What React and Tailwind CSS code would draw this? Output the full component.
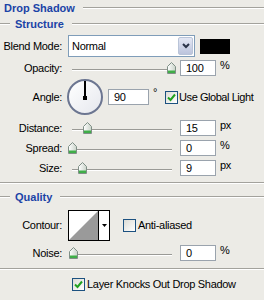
import React from "react";

const LINE = "h-0 border-t border-[#a3a29c] border-b border-b-white";

function SectionTitle({ children, lead }) {
  return (
    <div className="flex h-[16px] items-center">
      {lead && <div className={`w-[10px] ${LINE}`} />}
      <span
        className={`${lead ? "ml-[5px]" : "ml-[4px]"} font-bold text-[11px] leading-none tracking-normal text-[#1b43a6]`}
      >
        {children}
      </span>
      <div className={`ml-[8px] flex-1 ${LINE}`} />
    </div>
  );
}

function Label({ children }) {
  return <div className="mr-[6px] w-[62px] shrink-0 text-right text-[11px] leading-none text-black">{children}</div>;
}

function Thumb() {
  return (
    <svg width="9" height="12" viewBox="0 0 9 12">
      <defs>
        <linearGradient id="tg" x1="0" y1="0" x2="1" y2="0">
          <stop offset="0" stopColor="#ffffff" />
          <stop offset="1" stopColor="#c9d3c9" />
        </linearGradient>
      </defs>
      <path d="M0.5 4.5 L4.5 0.5 L8.5 4.5 V11.5 H0.5 Z" fill="url(#tg)" stroke="#7f8f86" />
      <rect x="1" y="8.5" width="7" height="2.5" fill="#3fae48" />
    </svg>
  );
}

function Slider({ pos }) {
  return (
    <div className="relative h-full w-[108px] shrink-0">
      <div className="absolute left-[4px] right-[4px] top-[9px] h-[2px] border-t border-[#9a9a96] bg-[#d4d3ce] border-b border-b-white" />
      <div className="absolute top-[2px]" style={{ left: pos - 68 - 4 }}>
        <Thumb />
      </div>
    </div>
  );
}

function Field({ value, w = "w-[36px]", ml = "ml-[4px]" }) {
  return (
    <div
      className={`${ml} ${w} flex h-[16px] shrink-0 items-center border border-[#9aa3ad] bg-white pl-[5px] text-[11px] leading-none`}
    >
      {value}
    </div>
  );
}

function Check({ checked }) {
  return (
    <div className="flex h-[13px] w-[13px] shrink-0 items-center justify-center border border-[#1c5180] bg-gradient-to-br from-[#dcdcd6] to-white">
      {checked && (
        <svg width="9" height="9" viewBox="0 0 9 9">
          <path d="M1 4.5 L3.5 7 L8 1.5" fill="none" stroke="#21a121" strokeWidth="2" />
        </svg>
      )}
    </div>
  );
}

function SliderRow({ label, pos, value, unit, mt = "mt-[4px]" }) {
  return (
    <div className={`${mt} flex h-[16px] items-center`}>
      <Label>{label}</Label>
      <Slider pos={pos} />
      <Field value={value} />
      <span className="ml-[4px] self-start text-[11px] leading-none">{unit}</span>
    </div>
  );
}

export default function App() {
  return (
    <div className="h-[300px] w-[264px] overflow-hidden bg-[#ecebe6] font-['Liberation_Sans',Arial,sans-serif] tracking-[-0.3px] text-black">
      <SectionTitle>Drop Shadow</SectionTitle>
      <SectionTitle lead>Structure</SectionTitle>

      {/* Blend mode */}
      <div className="mt-[3px] flex h-[22px] items-center">
        <Label>Blend Mode:</Label>
        <div className="flex h-[22px] w-[127px] items-stretch border border-[#7f9db9] bg-white">
          <span className="flex flex-1 items-center pl-[3px] text-[11px] leading-none">Normal</span>
          <div className="m-px flex w-[15px] items-center justify-center rounded-[2px] border border-[#b9c4d8] bg-gradient-to-b from-[#e4e8f4] to-[#bcc4dc]">
            <svg width="8" height="6" viewBox="0 0 8 6">
              <path d="M1 1 L4 4 L7 1" fill="none" stroke="#2a3448" strokeWidth="2" />
            </svg>
          </div>
        </div>
        <div className="ml-[5px] h-[15px] w-[30px] bg-black" />
      </div>

      <SliderRow label="Opacity:" pos={171} value="100" unit="%" mt="mt-[3px]" />

      {/* Angle */}
      <div className="mt-[3px] flex h-[36px] items-center">
        <Label>Angle:</Label>
        <div className="relative -ml-px h-[36px] w-[36px] shrink-0 rounded-full border-2 border-[#6c7691] bg-gradient-to-br from-white to-[#e6e8ee]">
          <div className="absolute left-[15px] top-0 h-[16px] w-[2px] bg-black" />
          <div className="absolute left-[14px] top-[15px] h-[4px] w-[4px] bg-black" />
        </div>
        <Field value="90" w="w-[41px]" ml="ml-[5px]" />
        <span className="ml-[4px] self-start pt-[8px] text-[11px] leading-none">°</span>
        <div className="ml-[8px]">
          <Check checked />
        </div>
        <span className="ml-px text-[11px] leading-none tracking-[-0.45px]">Use Global Light</span>
      </div>

      <SliderRow label="Distance:" pos={87} value="15" unit="px" mt="mt-[5px]" />
      <SliderRow label="Spread:" pos={72} value="0" unit="%" />
      <SliderRow label="Size:" pos={82} value="9" unit="px" />

      <div className={`mt-[6px] ${LINE}`} />
      <div className="mt-[5px]">
        <SectionTitle lead>Quality</SectionTitle>
      </div>

      {/* Contour */}
      <div className="mt-[5px] flex h-[31px] items-center">
        <Label>Contour:</Label>
        <div className="flex h-[31px] w-[42px] shrink-0 border border-black bg-white">
          <svg width="29" height="29" viewBox="0 0 29 29" className="shrink-0">
            <path d="M0 29 L29 0 V29 Z" fill="#9a9a9a" />
          </svg>
          <div className="flex flex-1 items-center justify-center border-l border-black">
            <svg width="5" height="3" viewBox="0 0 5 3">
              <path d="M0 0 H5 L2.5 3 Z" fill="#000" />
            </svg>
          </div>
        </div>
        <div className="ml-[13px]">
          <Check />
        </div>
        <span className="ml-[2px] text-[11px] leading-none">Anti-aliased</span>
      </div>

      <SliderRow label="Noise:" pos={73} value="0" unit="%" />

      <div className={`mt-[7px] ${LINE}`} />

      <div className="mt-[7px] flex h-[14px] items-center pl-[72px]">
        <Check checked />
        <span className="ml-[2px] text-[11px] leading-none">Layer Knocks Out Drop Shadow</span>
      </div>
    </div>
  );
}
